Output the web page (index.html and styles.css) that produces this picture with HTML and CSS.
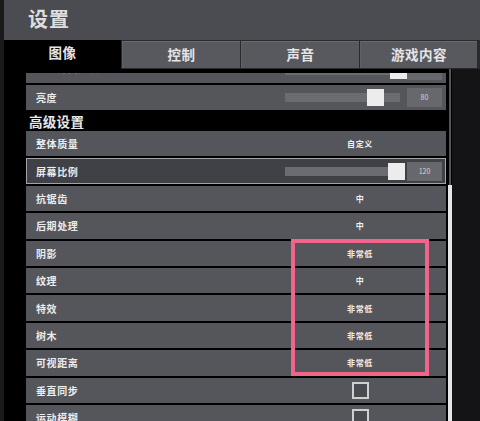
FILE: index.html
```html
<!DOCTYPE html>
<html lang="zh">
<head>
<meta charset="utf-8">
<title>设置</title>
<link rel="stylesheet" href="styles.css">
</head>
<body>
<div class="app">
  <header class="titlebar">设置</header>
  <nav class="tabs">
    <div class="tab active">图像</div>
    <div class="tab">控制</div>
    <div class="tab">声音</div>
    <div class="tab">游戏内容</div>
  </nav>
  <main class="main">
    <section class="panel">
      <div class="viewport">
        <div class="row partial">
          <div class="label">用户界面亮度</div>
          <div class="ctl slider">
            <div class="track"><div class="thumb" style="left:105px"></div></div>
            <div class="num"></div>
          </div>
        </div>
        <div class="row">
          <div class="label">亮度</div>
          <div class="ctl slider">
            <div class="track"><div class="thumb" style="left:82px"></div></div>
            <div class="num">80</div>
          </div>
        </div>
        <h2 class="section">高级设置</h2>
        <div class="row">
          <div class="label">整体质量</div>
          <div class="ctl"><span class="val">自定义</span></div>
        </div>
        <div class="row selected">
          <div class="label">屏幕比例</div>
          <div class="ctl slider">
            <div class="track"><div class="thumb" style="left:103px"></div></div>
            <div class="num">120</div>
          </div>
        </div>
        <div class="row">
          <div class="label">抗锯齿</div>
          <div class="ctl"><span class="val">中</span></div>
        </div>
        <div class="row">
          <div class="label">后期处理</div>
          <div class="ctl"><span class="val">中</span></div>
        </div>
        <div class="row">
          <div class="label">阴影</div>
          <div class="ctl"><span class="val">非常低</span></div>
        </div>
        <div class="row">
          <div class="label">纹理</div>
          <div class="ctl"><span class="val">中</span></div>
        </div>
        <div class="row">
          <div class="label">特效</div>
          <div class="ctl"><span class="val">非常低</span></div>
        </div>
        <div class="row">
          <div class="label">树木</div>
          <div class="ctl"><span class="val">非常低</span></div>
        </div>
        <div class="row">
          <div class="label">可视距离</div>
          <div class="ctl"><span class="val">非常低</span></div>
        </div>
        <div class="row">
          <div class="label">垂直同步</div>
          <div class="ctl"><span class="check"></span></div>
        </div>
        <div class="row">
          <div class="label">运动模糊</div>
          <div class="ctl"><span class="check"></span></div>
        </div>
      </div>
    </section>
    <div class="scrollbar">
      <div class="track-line"></div>
      <div class="scroll-thumb"></div>
    </div>
    <div class="side"></div>
    <div class="highlight"></div>
  </main>
</div>
</body>
</html>
```

FILE: styles.css
```css
html, body {
  margin: 0;
  padding: 0;
  background: #1a1a1b;
}

body {
  font-family: "Noto Sans CJK SC", "Noto Sans", sans-serif;
  font-weight: 700;
  color: #e6e6e6;
}

.app {
  margin-left: 4px;
  width: 476px;
  height: 421px;
  overflow: hidden;
  display: flex;
  flex-direction: column;
  background: #2a2a2d;
}

.titlebar {
  height: 40px;
  line-height: 38px;
  padding-left: 24px;
  font-size: 20px;
  letter-spacing: 1px;
  background: #4b4c51;
  color: #dedede;
}

.tabs {
  height: 29px;
  display: flex;
  gap: 1px;
  background: #2a2a2d;
}

.tab {
  flex: 0 0 117px;
  margin-top: 1px;
  height: 26px;
  line-height: 25px;
  text-align: center;
  font-size: 13.5px;
  letter-spacing: 0.5px;
  background: #58595f;
  border-top: 1px solid #6a6b70;
  border-left: 1px solid #616267;
  box-sizing: content-box;
  color: #e4e4e4;
}

.tab.active {
  background: #000;
  border-color: #000;
  margin-top: 0;
  height: 29px;
  border-top: 0;
  border-left: 0;
  flex-basis: 117px;
}

.tab:last-child {
  flex-basis: 116px;
}

.main {
  position: relative;
  flex: 1;
  display: flex;
  min-height: 0;
}

.panel {
  flex: 0 0 444px;
  background: #000;
  padding: 4px 2px 0 22px;
  box-sizing: border-box;
}

.viewport {
  height: 100%;
  overflow: hidden;
  display: flex;
  flex-direction: column;
}

.row {
  flex: 0 0 25.4px;
  margin-bottom: 2px;
  display: flex;
  align-items: center;
  background: #55565c;
  box-sizing: border-box;
}

.row.partial {
  margin-top: -15.4px;
}

.row.partial .label {
  margin-top: -5px;
}

.row.selected {
  background: #404146;
  border: 1px solid #a4a4a6;
}

.label {
  flex: 0 0 259px;
  box-sizing: border-box;
  padding-left: 10px;
  font-size: 10px;
  letter-spacing: 0.6px;
  color: #ececec;
}

.row.selected .label {
  flex-basis: 258px;
  padding-left: 9px;
}

.ctl {
  width: 150px;
  display: flex;
  justify-content: center;
  align-items: center;
}

.val {
  font-size: 8px;
  letter-spacing: 0.6px;
  color: #f0f0f0;
}

.slider {
  width: 157px;
  justify-content: flex-start;
}

.track {
  position: relative;
  width: 115px;
  height: 9px;
  background: #6b6c71;
}

.thumb {
  position: absolute;
  top: -4px;
  width: 17px;
  height: 17px;
  background: #ececec;
}

.num {
  margin-left: 7px;
  width: 35px;
  height: 19px;
  line-height: 19px;
  text-align: center;
  font-size: 7px;
  font-weight: 400;
  color: #d6d6d6;
  background: #67686d;
}

.section {
  flex: 0 0 18.6px;
  margin: 0;
  padding-left: 3px;
  font-size: 13.5px;
  line-height: 18px;
  letter-spacing: 0.3px;
  color: #e8e8e8;
}

.check {
  width: 17px;
  height: 17px;
  box-sizing: border-box;
  border: 2px solid #cfcfcf;
  background: #4a4b50;
}

.scrollbar {
  flex: 0 0 4px;
  display: flex;
  flex-direction: column;
  background: #000;
}

.track-line {
  flex: 0 0 116px;
  width: 2px;
  margin-left: 1px;
  background: #55565a;
}

.scroll-thumb {
  flex: 1;
  background: #e6e6e6;
}

.side {
  flex: 1;
  background: #141416;
}

.highlight {
  position: absolute;
  left: 287px;
  top: 170px;
  width: 138px;
  height: 137px;
  box-sizing: border-box;
  border: 4px solid #f1658b;
  pointer-events: none;
}
```
